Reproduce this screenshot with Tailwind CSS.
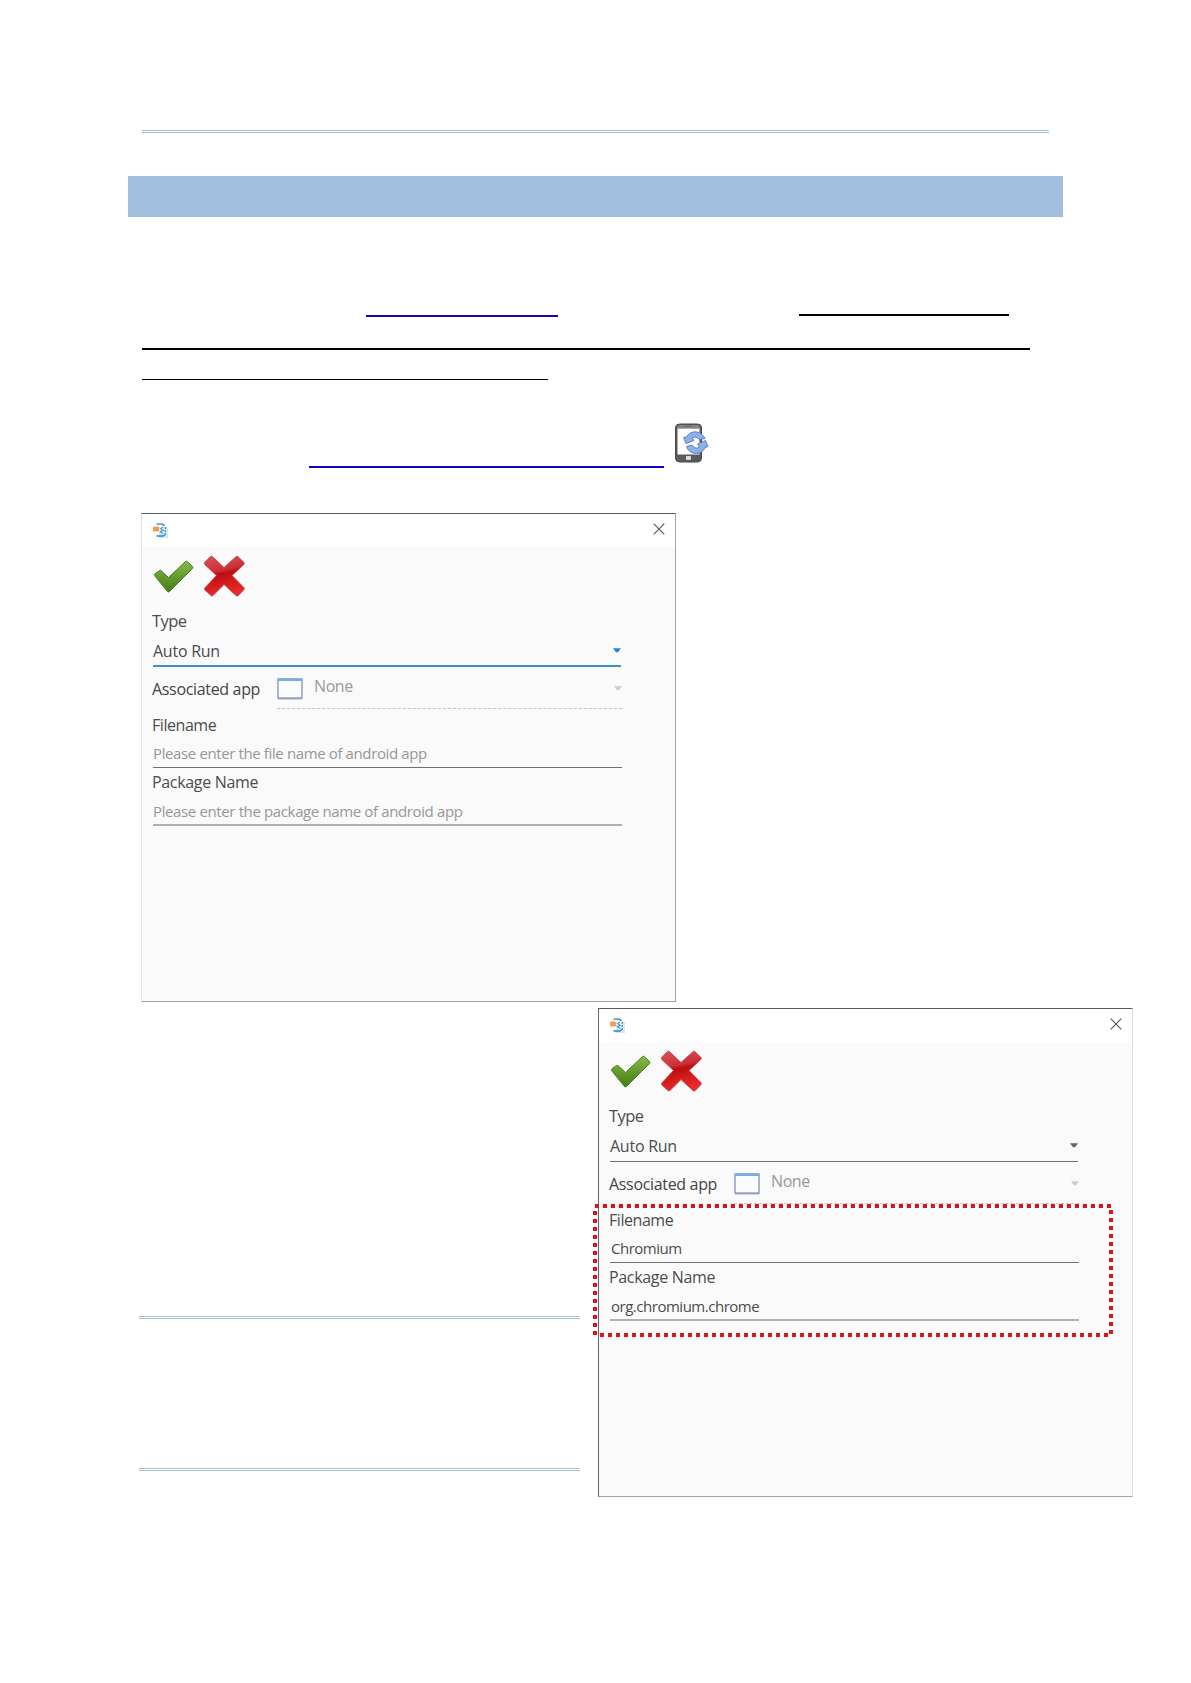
<!DOCTYPE html>
<html lang="en">
<head>
<meta charset="utf-8">
<title>Auto Run</title>
<script src="https://cdn.jsdelivr.net/npm/@tailwindcss/browser@4"></script>
</head>
<body class="bg-white font-['Open_Sans',sans-serif] text-[#4c4c4c]">
<svg class="absolute size-0">
  <defs>
    <linearGradient id="green" x1="0" y1="0" x2="0" y2="1"><stop offset="0" stop-color="#86bb4a"/><stop offset="1" stop-color="#437c12"/></linearGradient>
    <linearGradient id="red" x1="0" y1="0" x2="0.2" y2="1"><stop offset="0" stop-color="#d9545a"/><stop offset="0.42" stop-color="#c92f35"/><stop offset="0.5" stop-color="#bd0d10"/><stop offset="1" stop-color="#e92a2a"/></linearGradient>
    <symbol id="check" viewBox="0 0 41 34"><path d="M1.500 15.500Q1 14.500 2 13.700L6.500 10.500Q7.500 10 8.500 11L15.500 17.500L32.500 1.500Q33.500 .8 34.500 1.700L39.500 6.500Q40.300 7.500 39.500 8.500L16.500 31.500Q15.500 32.500 14.500 31.500Z" fill="url(#green)" stroke="#4d7a22" stroke-width="1"/></symbol>
    <symbol id="cross" viewBox="0 0 43 43"><path d="M7.500 1.500Q8.500 .8 9.500 1.800L21 12.500L33 1.800Q34 .8 35 1.800L40.800 7.300Q41.800 8.500 40.800 9.500L29 20.500L40.800 32.500Q41.800 33.800 40.800 34.800L35 40.700Q34 41.500 33 40.500L21 29.500L10 40.500Q9 41.500 8 40.500L1.800 34.800Q1 33.800 2 32.800L13.500 20.500L1.800 9.500Q.8 8.500 1.800 7.300Z" fill="url(#red)" stroke="#c4454a" stroke-width="1"/></symbol>
    <symbol id="logo" viewBox="0 0 16 16"><path d="M6 4h9v11H6z" fill="#d5e7f3"/><path d="M3.500 1.200h6L11.500 3M3.500 13h6.500L12.500 11" fill="none" stroke="#2486c0" stroke-width="1.300"/><path d="M10 4L7.500 5.500L10.500 7.500L7 8.500L10 10.500" fill="none" stroke="#2d8cc4"/><path d="M12.300 4v7" stroke="#2486c0" stroke-dasharray="2 1"/><rect y="3.500" width="6" height="5" rx="1" fill="#f59a50"/></symbol>
    <symbol id="window" viewBox="0 0 26 22"><rect x="1" y="1" width="24" height="19.500" rx=".5" fill="#fbfcfe" stroke="#8e9fc0" stroke-width="1.500"/><path d="M.5 1.700h25" stroke="#79aee4" stroke-width="2.600"/><path d="M1 20.300h24" stroke="#969bbd" stroke-width="1.800"/></symbol>
    <symbol id="close" viewBox="0 0 12 12"><path d="M.7.7L11.300 11.300M11.300.7L.7 11.300" stroke="#555" stroke-width="1.100"/></symbol>
    <symbol id="caret" viewBox="0 0 8 5"><path d="M0 .3H8L5 4.300H3Z" fill="currentColor"/></symbol>
  </defs>
</svg>

<main class="flex h-[1683px] w-[1191px] flex-col overflow-hidden">
  <div class="mt-[130px] ml-[142px] h-[3px] w-[907px] border-y border-[#a3bfd2]"></div>
  <div class="mt-[43px] ml-32 h-[41px] w-[935px] bg-[#a2bedc]"></div>

  <div class="mt-[97px] ml-[142px] flex h-[3px] items-start">
    <div class="mt-px ml-[224px] h-0.5 w-[192px] bg-[#1406a8]"></div>
    <div class="ml-[241px] h-0.5 w-[210px] bg-black"></div>
  </div>
  <div class="mt-[31px] ml-[142px] h-0.5 w-[888px] bg-black"></div>
  <div class="mt-[29px] ml-[142px] h-px w-[406px] bg-black"></div>

  <div class="mt-[42px] ml-[309px] flex h-[46px] gap-[10px]">
    <div class="h-[46px] w-[355px] border-b-2 border-[#0d02c4]"></div>
    <svg class="mt-px h-10 w-9" viewBox="0 0 36 40">
      <rect x="1.500" y="1" width="26" height="38" rx="4" fill="#5b5b5d" stroke="#484848"/>
      <path d="M3 5q0-3 3-3h17q3 0 3 3z" fill="#858585"/>
      <path d="M10 3.200h8" stroke="#666"/>
      <path d="M3.500 5.500h22v26h-22z" fill="#fff"/>
      <rect x="12" y="33" width="5" height="4" rx="1" fill="#ddd"/>
      <path d="M9.500 14.500L12.500 14Q15 9 21 8.800Q28 9 31 15.500L25 16.500Q22 12.500 18 15L20 17.500L12 20.500Z" fill="#8eb0e8" stroke="#5277bb" stroke-width=".9" stroke-linejoin="round"/>
      <path d="M34 23.500L31 24.500Q29 30 22.500 30.500Q15 30.500 12.500 23.500L18 22Q21.500 27 25.500 24L23.500 21L31.500 17.500Z" fill="#8eb0e8" stroke="#5277bb" stroke-width=".9" stroke-linejoin="round"/>
    </svg>
  </div>

  <section class="mt-[45px] ml-[141px] flex h-[489px] w-[535px] shrink-0 flex-col border border-t-[#5c5c5c] border-r-[#a3a3a3] border-b-[#a3a3a3] border-l-[#e4e4e4] bg-[#fafafa]">
    <header class="flex h-[33px] items-start justify-between bg-white pt-[9px] pr-[10px] pl-[11px]">
      <svg class="size-4"><use href="#logo"/></svg>
      <svg class="size-3"><use href="#close"/></svg>
    </header>
    <div class="flex h-16 items-start gap-[9px] pt-2 pl-[11px]">
      <svg class="mt-[5px] h-[34px] w-[41px]"><use href="#check"/></svg>
      <svg class="size-[43px]"><use href="#cross"/></svg>
    </div>
    <div class="flex w-[480px] flex-col pl-[11px]">
      <div class="-ml-px text-[16.5px] leading-5 tracking-[-0.6px]"><span>Type</span></div>
      <div class="flex h-9 w-[468px] items-start justify-between border-b-2 border-[#3992cb] pt-2.5 text-[16px] leading-5 tracking-[-0.25px]"><span>Auto Run</span><svg class="mt-[7px] h-[5px] w-2 text-[#2186da]"><use href="#caret"/></svg></div>
      <div class="flex h-[42px] w-[469px] items-start">
        <div class="-ml-px w-[125px] pt-3 text-[16px] leading-5 tracking-[-0.33px] text-[#444]"><span>Associated app</span></div>
        <div class="flex h-[42px] w-[345px] items-start border-b border-dashed border-[#c4c4c4] pt-[9px] text-[16px] leading-5 tracking-[-0.4px] text-[#999]">
          <svg class="mt-0.5 h-[22px] w-[26px]"><use href="#window"/></svg><span class="ml-[11px]">None</span><svg class="mt-2.5 ml-auto h-[5px] w-2 text-[#ccc]"><use href="#caret"/></svg>
        </div>
      </div>
      <div class="-ml-px h-[26px] pt-1.5 text-[16px] leading-5 tracking-[-0.45px]"><span>Filename</span></div>
      <div class="h-[33px] w-[469px] border-b border-[#707070] pt-2 text-[15px] leading-5 tracking-[-0.38px] text-[#979797]"><span>Please enter the file name of android app</span></div>
      <div class="-ml-px h-[25px] pt-1 text-[16px] leading-5 tracking-[-0.33px]"><span>Package Name</span></div>
      <div class="h-[33px] w-[469px] border-b-2 border-[#b0b0b0] pt-2 text-[15px] leading-5 tracking-[-0.37px] text-[#979797]"><span>Please enter the package name of android app</span></div>
    </div>
  </section>

  <div class="mt-1.5 ml-[139px] flex h-[489px] shrink-0">
    <div class="mt-[308px] mr-[18px] h-[155px] w-[441px]">
      <div class="h-[3px] border-y border-[#a3bfd7]"></div>
      <div class="mt-[149px] h-[3px] border-y border-[#a3bfd7]"></div>
    </div>
    <section class="relative flex h-[489px] w-[535px] shrink-0 flex-col border border-t-[#5c5c5c] border-r-[#dedede] border-b-[#a3a3a3] border-l-[#666] bg-[#fafafa]">
      <header class="flex h-[33px] items-start justify-between bg-white pt-[9px] pr-[10px] pl-[11px]">
        <svg class="size-4"><use href="#logo"/></svg>
        <svg class="size-3"><use href="#close"/></svg>
      </header>
      <div class="flex h-16 items-start gap-[9px] pt-2 pl-[11px]">
        <svg class="mt-[5px] h-[34px] w-[41px]"><use href="#check"/></svg>
        <svg class="size-[43px]"><use href="#cross"/></svg>
      </div>
      <div class="flex w-[480px] flex-col pl-[11px]">
        <div class="-ml-px text-[16.5px] leading-5 tracking-[-0.6px]"><span>Type</span></div>
        <div class="flex h-9 w-[468px] items-start justify-between border-b border-[#707070] pt-2.5 text-[16px] leading-5 tracking-[-0.25px]"><span>Auto Run</span><svg class="mt-[7px] h-[5px] w-2 text-[#666]"><use href="#caret"/></svg></div>
        <div class="flex h-[42px] w-[469px] items-start">
          <div class="-ml-px w-[125px] pt-3 text-[16px] leading-5 tracking-[-0.33px] text-[#444]"><span>Associated app</span></div>
          <div class="flex h-[42px] w-[345px] items-start border-b border-dashed border-[#c4c4c4] pt-[9px] text-[16px] leading-5 tracking-[-0.4px] text-[#999]">
            <svg class="mt-0.5 h-[22px] w-[26px]"><use href="#window"/></svg><span class="ml-[11px]">None</span><svg class="mt-2.5 ml-auto h-[5px] w-2 text-[#ccc]"><use href="#caret"/></svg>
          </div>
        </div>
        <div class="-ml-px h-[26px] pt-1.5 text-[16px] leading-5 tracking-[-0.45px]"><span>Filename</span></div>
        <div class="h-[33px] w-[469px] border-b border-[#707070] pt-2 pl-px text-[15px] leading-5 tracking-[-0.5px]"><span>Chromium</span></div>
        <div class="-ml-px h-[25px] pt-1 text-[16px] leading-5 tracking-[-0.33px]"><span>Package Name</span></div>
        <div class="h-[33px] w-[469px] border-b-2 border-[#b0b0b0] pt-2 pl-px text-[15px] leading-5 tracking-[-0.48px]"><span>org.chromium.chrome</span></div>
      </div>
      <!-- dotted highlight around the two filled-in fields -->
      <svg class="absolute -left-1.5 top-[195px] h-[133px] w-[522px]" viewBox="0 0 522 133" fill="none" stroke="#df1217" stroke-width="4" stroke-dasharray="4 4" shape-rendering="crispEdges">
        <path d="M2 2H518M7 131H518M2 7V133M518 6V131"/>
      </svg>
    </section>
  </div>
</main>
</body>
</html>
